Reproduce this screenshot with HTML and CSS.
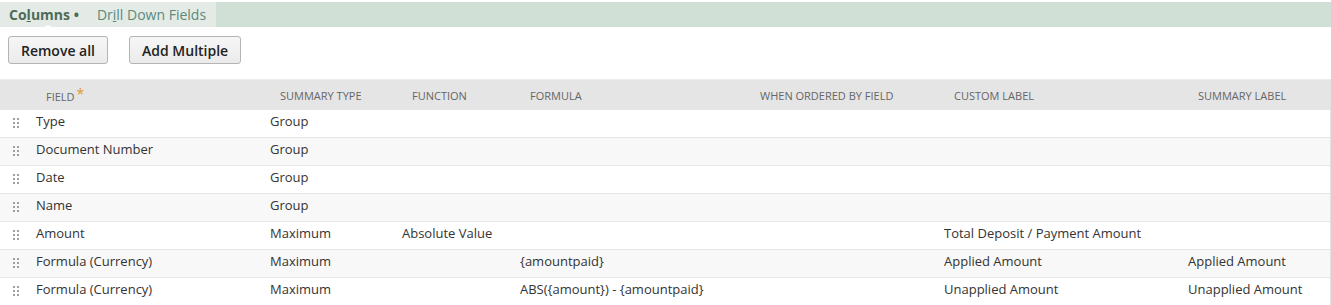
FILE: index.html
```html
<!DOCTYPE html>
<html lang="en">
<head>
  <meta charset="UTF-8">
  <title>Saved Search Columns</title>
  <link rel="stylesheet" href="styles.css">
</head>
<body>
  <div class="tabbar">
    <div class="tabs">
      <span class="tab active">Co<u>l</u>umns <span class="dot">&bull;</span></span>
      <span class="tab">Dr<u>i</u>ll Down Fields</span>
    </div>
    <div class="tabfill"></div>
  </div>

  <div class="actions">
    <button class="btn">Remove all</button>
    <button class="btn">Add Multiple</button>
  </div>

  <div class="grid">
    <div class="row head">
      <div class="cell"></div>
      <div class="cell">FIELD<span class="req">*</span></div>
      <div class="cell">SUMMARY TYPE</div>
      <div class="cell">FUNCTION</div>
      <div class="cell">FORMULA</div>
      <div class="cell">WHEN ORDERED BY FIELD</div>
      <div class="cell">CUSTOM LABEL</div>
      <div class="cell">SUMMARY LABEL</div>
    </div>

    <div class="row">
      <div class="cell handle"></div>
      <div class="cell">Type</div>
      <div class="cell">Group</div>
      <div class="cell"></div><div class="cell"></div><div class="cell"></div><div class="cell"></div><div class="cell"></div>
    </div>
    <div class="row">
      <div class="cell handle"></div>
      <div class="cell">Document Number</div>
      <div class="cell">Group</div>
      <div class="cell"></div><div class="cell"></div><div class="cell"></div><div class="cell"></div><div class="cell"></div>
    </div>
    <div class="row">
      <div class="cell handle"></div>
      <div class="cell">Date</div>
      <div class="cell">Group</div>
      <div class="cell"></div><div class="cell"></div><div class="cell"></div><div class="cell"></div><div class="cell"></div>
    </div>
    <div class="row">
      <div class="cell handle"></div>
      <div class="cell">Name</div>
      <div class="cell">Group</div>
      <div class="cell"></div><div class="cell"></div><div class="cell"></div><div class="cell"></div><div class="cell"></div>
    </div>
    <div class="row">
      <div class="cell handle"></div>
      <div class="cell">Amount</div>
      <div class="cell">Maximum</div>
      <div class="cell">Absolute Value</div>
      <div class="cell"></div>
      <div class="cell"></div>
      <div class="cell">Total Deposit / Payment Amount</div>
      <div class="cell"></div>
    </div>
    <div class="row">
      <div class="cell handle"></div>
      <div class="cell">Formula (Currency)</div>
      <div class="cell">Maximum</div>
      <div class="cell"></div>
      <div class="cell">{amountpaid}</div>
      <div class="cell"></div>
      <div class="cell">Applied Amount</div>
      <div class="cell">Applied Amount</div>
    </div>
    <div class="row">
      <div class="cell handle"></div>
      <div class="cell">Formula (Currency)</div>
      <div class="cell">Maximum</div>
      <div class="cell"></div>
      <div class="cell">ABS({amount}) - {amountpaid}</div>
      <div class="cell"></div>
      <div class="cell">Unapplied Amount</div>
      <div class="cell">Unapplied Amount</div>
    </div>
  </div>
</body>
</html>
```

FILE: styles.css
```css
body {
  margin: 0;
  padding-top: 2px;
  background-color: #fff;
  color: #333;
  font-family: "Open Sans", "Liberation Sans", sans-serif;
  font-size: 13px;
}

/* tab strip */
.tabbar {
  display: flex;
  height: 25px;
}
.tabs {
  display: flex;
  flex-shrink: 0;
  align-items: center;
  background-color: #e4ebe6;
  padding: 0 10px 0 9px;
  white-space: nowrap;
}
.tab {
  font-size: 14px;
  color: #5a8a7c;
  position: relative;
}
.tab.active {
  font-weight: 700;
  color: #4e6b58;
  margin-right: 18px;
}
.tab.active::after {
  content: "";
  position: absolute;
  left: 32px;
  bottom: -5px;
  border-left: 7px solid transparent;
  border-right: 7px solid transparent;
  border-bottom: 4px solid #fff;
}
.dot {
  font-size: 14px;
}
.tabfill {
  flex: 1;
  background-color: #d1e0d6;
}

/* buttons */
.actions {
  display: flex;
  gap: 21px;
  padding: 9px 8px 0;
}
.btn {
  height: 28px;
  padding: 0 12px;
  background: linear-gradient(#f6f6f6, #ebebeb);
  border: 1px solid #b4b4b4;
  border-radius: 3px;
  font-family: "Open Sans", "Liberation Sans", sans-serif;
  font-size: 14px;
  font-weight: 600;
  color: #222;
}

/* columns grid */
.grid {
  margin-top: 15px;
  border-top: 1px solid #ececec;
  border-right: 1px solid #e2e2e2;
}
.row {
  display: grid;
  grid-template-columns: 26px 234px 132px 118px 230px 194px 244px 1fr;
  height: 28px;
  align-items: center;
  border-bottom: 1px solid #e6e6e6;
  box-sizing: border-box;
}
.row:nth-child(odd) {
  background-color: #f8f8f8;
}
.cell {
  padding-left: 10px;
  padding-bottom: 5px;
  white-space: nowrap;
}
.row.head {
  height: 30px;
  background-color: #e5e5e5;
  border-bottom: none;
}
.row.head .cell {
  padding-left: 20px;
  padding-bottom: 0;
  font-size: 11px;
  color: #666;
}
.req {
  color: #e39a2d;
  font-size: 14px;
  margin-left: 2px;
  position: relative;
  top: -2px;
}
.handle {
  padding: 0;
  height: 11px;
  width: 7px;
  margin: 0 0 2px 12px;
  background-image: radial-gradient(circle, #a0a0a0 1.1px, transparent 1.4px);
  background-size: 4px 4px;
}
```
